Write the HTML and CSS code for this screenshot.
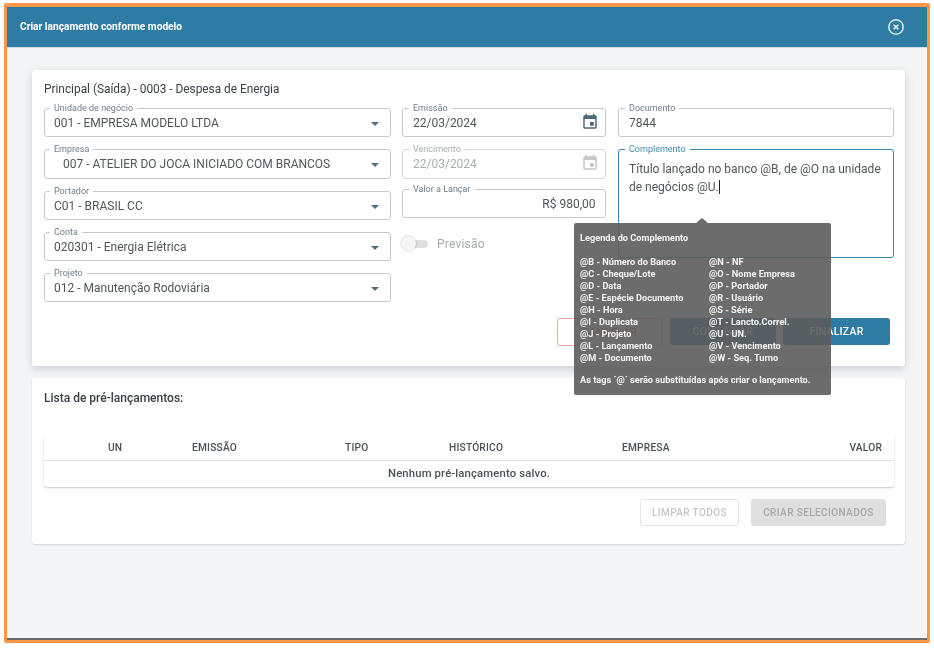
FILE: index.html
```html
<!DOCTYPE html>
<html lang="pt-BR">
<head>
<meta charset="utf-8">
<title>Criar lançamento conforme modelo</title>
<link rel="stylesheet" href="styles.css">
</head>
<body>
<div class="frame">
  <header class="topbar">
    <h1 class="topbar-title">Criar lançamento conforme modelo</h1>
    <svg class="close-icon" viewBox="0 0 18 18" width="18" height="18" aria-hidden="true">
      <circle cx="9" cy="9" r="7.2" fill="none" stroke="#fff" stroke-width="1.3"/>
      <path d="M6.7 6.7l4.6 4.6M11.3 6.7l-4.6 4.6" fill="none" stroke="#fff" stroke-width="1.4"/>
    </svg>
  </header>
  <main class="content">
    <section class="card card-form">
      <h2 class="card-title">Principal (Saída) - 0003 - Despesa de Energia</h2>
      <div class="form-grid">
        <div class="col">
          <div class="field"><span class="field-label">Unidade de negócio</span><span class="field-value">001 - EMPRESA MODELO LTDA</span><i class="caret"></i></div>
          <div class="field"><span class="field-label">Empresa</span><span class="field-value indent">007 - ATELIER DO JOCA INICIADO COM BRANCOS</span><i class="caret"></i></div>
          <div class="field"><span class="field-label">Portador</span><span class="field-value">C01 - BRASIL CC</span><i class="caret"></i></div>
          <div class="field"><span class="field-label">Conta</span><span class="field-value">020301 - Energia Elétrica</span><i class="caret"></i></div>
          <div class="field"><span class="field-label">Projeto</span><span class="field-value">012 - Manutenção Rodoviária</span><i class="caret"></i></div>
        </div>
        <div class="col col-side">
          <div class="field"><span class="field-label">Emissão</span><span class="field-value">22/03/2024</span>
            <svg class="cal-icon" viewBox="0 0 24 24" width="18" height="18" aria-hidden="true"><path d="M17 12h-5v5h5v-5zM16 1v2H8V1H6v2H5c-1.11 0-1.99.9-1.99 2L3 19c0 1.1.89 2 2 2h14c1.1 0 2-.9 2-2V5c0-1.1-.9-2-2-2h-1V1h-2zm3 18H5V8h14v11z"/></svg>
          </div>
          <div class="field is-disabled"><span class="field-label">Vencimento</span><span class="field-value">22/03/2024</span>
            <svg class="cal-icon" viewBox="0 0 24 24" width="18" height="18" aria-hidden="true"><path d="M17 12h-5v5h5v-5zM16 1v2H8V1H6v2H5c-1.11 0-1.99.9-1.99 2L3 19c0 1.1.89 2 2 2h14c1.1 0 2-.9 2-2V5c0-1.1-.9-2-2-2h-1V1h-2zm3 18H5V8h14v11z"/></svg>
          </div>
          <div class="field field-tight"><span class="field-label">Valor a Lançar</span><span class="field-value right">R$ 980,00</span></div>
          <div class="toggle-row">
            <span class="toggle"><span class="toggle-track"></span><span class="toggle-thumb"></span></span>
            <span class="toggle-label">Previsão</span>
          </div>
        </div>
        <div class="col col-side col-last">
          <div class="field"><span class="field-label">Documento</span><span class="field-value">7844</span></div>
          <div class="field field-area"><span class="field-label">Complemento</span>
            <p class="area-text">Título lançado no banco @B, de @O na unidade de negócios @U.<span class="text-caret"></span></p>
          </div>
        </div>
      </div>
      <div class="actions">
        <button class="btn btn-cancel">CANCELAR</button>
        <button class="btn btn-primary btn-continue">CONTINUAR</button>
        <button class="btn btn-primary btn-finish">FINALIZAR</button>
      </div>
    </section>

    <section class="card card-list">
      <h2 class="card-title list-title">Lista de pré-lançamentos:</h2>
      <div class="table">
        <div class="tr th">
          <span class="c-un">UN</span><span class="c-em">EMISSÃO</span><span class="c-ti">TIPO</span><span class="c-hi">HISTÓRICO</span><span class="c-ep">EMPRESA</span><span class="c-va">VALOR</span>
        </div>
        <div class="empty">Nenhum pré-lançamento salvo.</div>
      </div>
      <div class="list-actions">
        <button class="btn btn-ghost">LIMPAR TODOS</button>
        <button class="btn btn-off">CRIAR SELECIONADOS</button>
      </div>
    </section>
  </main>

  <aside class="tooltip">
    <div class="tip-title">Legenda do Complemento</div>
    <div class="tip-cols">
      <ul class="tip-list tip-left">
        <li>@B - Número do Banco</li><li>@C - Cheque/Lote</li><li>@D - Data</li><li>@E - Espécie Documento</li><li>@H - Hora</li><li>@I - Duplicata</li><li>@J - Projeto</li><li>@L - Lançamento</li><li>@M - Documento</li>
      </ul>
      <ul class="tip-list">
        <li>@N - NF</li><li>@O - Nome Empresa</li><li>@P - Portador</li><li>@R - Usuário</li><li>@S - Série</li><li>@T - Lancto.Correl.</li><li>@U - UN.</li><li>@V - Vencimento</li><li>@W - Seq. Turno</li>
      </ul>
    </div>
    <div class="tip-foot">As tags ´@´ serão substituídas após criar o lançamento.</div>
  </aside>
</div>
</body>
</html>
```
FILE: styles.css
```css
* { box-sizing: border-box; }
html, body { margin: 0; padding: 0; background: #fff; }
body {
  width: 934px;
  height: 648px;
  overflow: hidden;
  font-family: Roboto, "Liberation Sans", sans-serif;
  color: #4a5157;
}
.frame {
  position: relative;
  width: 926px;
  height: 640px;
  margin: 3px 0 0 4px;
  border: 3px solid #fb9847;
  border-top-width: 4px;
  border-radius: 2px;
  background: #f4f5f7;
  display: flex;
  flex-direction: column;
  filter: blur(.3px);
}
.frame::after {
  content: "";
  position: absolute;
  left: 0;
  right: 0;
  bottom: 0;
  height: 2px;
  background: #666a6d;
}
.topbar {
  height: 41px;
  flex: none;
  display: flex;
  align-items: center;
  justify-content: space-between;
  padding: 0 22px 1px 13px;
  background: #2e7ba3;
  border-bottom: 1px solid #cfe0ea;
}
.topbar-title {
  margin: 0;
  font-size: 10.2px;
  font-weight: 700;
  color: #fff;
}
.close-icon { display: block; }
.content {
  flex: 1;
  padding: 22px 22px 0 25px;
  display: flex;
  flex-direction: column;
  gap: 12px;
}
.card {
  background: #fff;
  border-radius: 3px;
  padding: 0 11px 0 12px;
}
.card-form {
  height: 296px;
  padding-top: 12px;
  box-shadow: 0 3px 8px rgba(60, 70, 80, .22);
}
.card-list {
  height: 166px;
  padding-top: 13px;
  box-shadow: 0 1px 2px rgba(60, 70, 80, .18);
}
.card-title {
  margin: 0;
  font-size: 11.85px;
  font-weight: 400;
  line-height: 14px;
  color: #3a4147;
}
.form-grid {
  display: grid;
  grid-template-columns: 347px 204px 277px;
  column-gap: 11px;
  margin-top: 12px;
  height: 194px;
}
.col {
  display: flex;
  flex-direction: column;
  gap: 12px;
}
.col-last { margin-left: 1px; }
.field {
  position: relative;
  flex: none;
  height: 29.25px;
  display: flex;
  align-items: center;
  padding: 1px 9px 0;
  background: #fff;
  border: 1px solid #c6cacd;
  border-radius: 3px;
}
.col-side .field { padding-left: 10px; }
.field-tight { margin-top: -1.5px; }
.field-label {
  position: absolute;
  top: -6px;
  left: 5px;
  padding: 0 4px;
  background: #fff;
  font-size: 9px;
  line-height: 10px;
  color: #6d7f8b;
  white-space: nowrap;
}
.col-side .field-label { left: 6px; }
.field-value {
  font-size: 12px;
  line-height: 16px;
  color: #50565c;
  white-space: nowrap;
}
.field-value.indent { padding-left: 9px; }
.field-value.right { margin-left: auto; padding-right: .5px; }
.caret {
  position: absolute;
  right: 11px;
  top: 13px;
  width: 0;
  height: 0;
  border-left: 4px solid transparent;
  border-right: 4px solid transparent;
  border-top: 4px solid #566d7e;
}
.cal-icon {
  position: absolute;
  right: 6px;
  top: 4px;
  fill: #4d6a7d;
}
.is-disabled { border-color: #d4d6d8; }
.is-disabled .field-label { color: #a8adb0; }
.is-disabled .field-value { color: #a9adb0; }
.is-disabled .cal-icon { fill: #c4c7c9; }
.col-side .field-area {
  height: 108.5px;
  align-items: flex-start;
  padding: 0 10px;
  border: 1px solid #3d8ab0;
}
.col-side .field-area .field-label { color: #3d8ab0; }
.area-text {
  margin: 9.5px 0 0;
  font-size: 12px;
  line-height: 18px;
  color: #50565c;
}
.text-caret {
  display: inline-block;
  width: 1px;
  height: 14px;
  vertical-align: -3px;
  background: #222;
}
.toggle-row {
  display: flex;
  align-items: center;
  gap: 9px;
  margin-top: .5px;
  height: 26px;
}
.toggle {
  position: relative;
  display: block;
  width: 27px;
  height: 15px;
  margin-left: -1px;
}
.toggle-track {
  position: absolute;
  left: 3px;
  right: 0;
  top: 4px;
  height: 8px;
  border-radius: 4px;
  background: #dedede;
}
.toggle-thumb {
  position: absolute;
  left: 0;
  top: 0;
  width: 15px;
  height: 15px;
  border-radius: 50%;
  background: #f5f5f5;
  box-shadow: 0 0 2px rgba(0, 0, 0, .25);
}
.toggle-label {
  font-size: 12px;
  letter-spacing: .2px;
  color: #a7abae;
}
.actions {
  display: flex;
  justify-content: flex-end;
  margin-top: 16px;
  padding-right: 4px;
}
.btn {
  display: block;
  border-radius: 3px;
  font-family: inherit;
  font-size: 10.4px;
  font-weight: 500;
  letter-spacing: .3px;
  padding: 0;
  text-align: center;
}
.btn-cancel {
  width: 105px;
  height: 28px;
  margin-right: 8px;
  background: #fff;
  border: 1px solid #f0a7a4;
  color: #d9534f;
}
.btn-primary {
  width: 107px;
  height: 27px;
  background: #2e7ba3;
  border: 0;
  color: #fff;
}
.btn-continue { width: 106px; margin-right: 7px; }
.list-title {
  font-weight: 500;
  font-size: 12px;
}
.table {
  margin-top: 30px;
  background: #fff;
  border-radius: 3px;
  box-shadow: 0 1px 2px rgba(60, 70, 80, .3);
}
.tr {
  height: 26px;
  padding-right: 12px;
  border-bottom: 1px solid #e2e4e6;
  display: grid;
  grid-template-columns: 64px 84px 153px 104px 173px 1fr auto;
  align-items: center;
}
.th span {
  font-size: 10.2px;
  font-weight: 500;
  letter-spacing: .2px;
  color: #4a5157;
  white-space: nowrap;
}
.c-un { grid-column: 2; }
.c-em { grid-column: 3; }
.c-ti { grid-column: 4; }
.c-hi { grid-column: 5; }
.c-ep { grid-column: 6; }
.c-va { grid-column: 7; }
.empty {
  height: 26px;
  line-height: 26px;
  text-align: center;
  font-size: 11.3px;
  font-weight: 500;
  letter-spacing: .15px;
  color: #4a5157;
}
.list-actions {
  display: flex;
  justify-content: flex-end;
  gap: 12px;
  margin-top: 12px;
  padding-right: 8px;
}
.btn-ghost {
  width: 99px;
  height: 26.5px;
  font-size: 10px;
  letter-spacing: .4px;
  background: #fff;
  border: 1px solid #e2e3e4;
  color: #c3c5c7;
}
.btn-off {
  width: 135px;
  height: 26.5px;
  font-size: 10px;
  letter-spacing: .4px;
  background: #dfdfdf;
  border: 0;
  color: #a9a9a9;
}
.tooltip {
  position: absolute;
  left: 567px;
  top: 216px;
  width: 257px;
  height: 172px;
  padding: 9px 6px 0;
  border-radius: 2px;
  background: rgba(92, 92, 92, .9);
  color: #f4f4f4;
  font-size: 9.2px;
  font-weight: 700;
  line-height: 12px;
}
.tooltip::before {
  content: "";
  position: absolute;
  left: 122px;
  top: -5px;
  width: 0;
  height: 0;
  border-left: 6px solid transparent;
  border-right: 6px solid transparent;
  border-bottom: 5px solid rgba(92, 92, 92, .9);
}
.tip-cols {
  display: grid;
  grid-template-columns: 129px 1fr;
  margin-top: 12px;
}
.tip-list {
  list-style: none;
  margin: 0;
  padding: 0;
}
.tip-foot { margin-top: 10px; }
```
